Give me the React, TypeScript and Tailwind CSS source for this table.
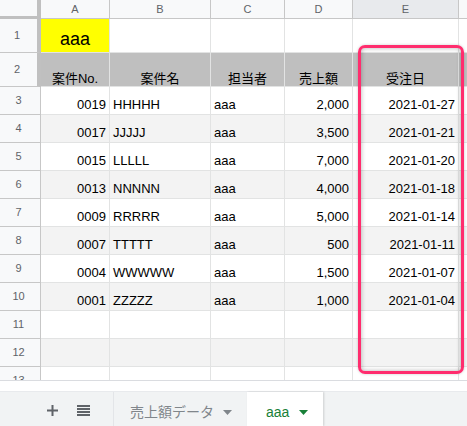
import React from "react";

type Row = {
  no: string;
  name: string;
  person: string;
  amount: string;
  date: string;
};

const data: Row[] = [
  { no: "0019", name: "HHHHH", person: "aaa", amount: "2,000", date: "2021-01-27" },
  { no: "0017", name: "JJJJJ", person: "aaa", amount: "3,500", date: "2021-01-21" },
  { no: "0015", name: "LLLLL", person: "aaa", amount: "7,000", date: "2021-01-20" },
  { no: "0013", name: "NNNNN", person: "aaa", amount: "4,000", date: "2021-01-18" },
  { no: "0009", name: "RRRRR", person: "aaa", amount: "5,000", date: "2021-01-14" },
  { no: "0007", name: "TTTTT", person: "aaa", amount: "500", date: "2021-01-11" },
  { no: "0004", name: "WWWWW", person: "aaa", amount: "1,500", date: "2021-01-07" },
  { no: "0001", name: "ZZZZZ", person: "aaa", amount: "1,000", date: "2021-01-04" },
];

const headers = ["案件No.", "案件名", "担当者", "売上額", "受注日"];

const cell = "border-r border-b border-[#e2e3e3] flex items-end pb-[2px] overflow-hidden whitespace-nowrap";
const rowHead =
  "bg-[#f8f9fa] border-r border-b border-[#c7c7c7] flex items-center justify-center text-[11px] text-[#5f6368] pr-[3px]";

const App = () => {
  // rows 3..13 : 8 data rows + empty ones
  const bodyRows: (Row | null)[] = [...data, null, null, null];

  return (
    <div className="w-[467px] h-[426px] flex flex-col bg-white overflow-hidden font-['Liberation_Sans','Noto_Sans_CJK_JP',sans-serif] text-[13px] leading-[15px] text-black">
      <div className="relative h-[380px] overflow-hidden">
        <div className="grid grid-cols-[41px_69px_101px_74px_68px_106px_8px] grid-rows-[19px_34px_34px_repeat(11,28px)]">
          {/* column header */}
          <div className="bg-[#f8f9fa] border-r-4 border-b-[3px] border-[#c0c0c0]" />
          {["A", "B", "C", "D", "E"].map((c) => (
            <div
              key={c}
              className={`${c === "E" ? "bg-[#e8eaed]" : "bg-[#f8f9fa]"} border-r border-b border-[#c7c7c7] flex items-center justify-center text-[11px] text-[#5f6368]`}
            >
              {c}
            </div>
          ))}
          <div className="bg-[#f8f9fa] border-b border-[#c7c7c7]" />

          {/* row 1 */}
          <div className={`${rowHead} border-r-4 border-r-[#c0c0c0]`}>1</div>
          <div className="bg-[#ffff00] border-r border-b border-[#e2e3e3] flex items-end justify-center pb-[4px] text-[18px] leading-none">
            aaa
          </div>
          <div className={cell} />
          <div className={cell} />
          <div className={cell} />
          <div className={cell} />
          <div className="border-b border-[#e2e3e3]" />

          {/* row 2 */}
          <div className={`${rowHead} border-r-4 border-r-[#c0c0c0]`}>2</div>
          {headers.map((h) => (
            <div key={h} className={`${cell} bg-[#bfbfbf] justify-center !pb-0`}>
              {h}
            </div>
          ))}
          <div className="bg-[#bfbfbf] border-b border-[#e2e3e3]" />

          {/* rows 3.. */}
          {bodyRows.map((r, i) => {
            const bg = i % 2 === 1 ? "bg-[#f3f3f3]" : "bg-white";
            return (
              <React.Fragment key={i}>
                <div className={rowHead}>{i + 3}</div>
                <div className={`${cell} ${bg} justify-end pr-[3px]`}>{r?.no}</div>
                <div className={`${cell} ${bg} pl-[3px]`}>{r?.name}</div>
                <div className={`${cell} ${bg} pl-[3px]`}>{r?.person}</div>
                <div className={`${cell} ${bg} justify-end pr-[3px]`}>{r?.amount}</div>
                <div className={`${cell} ${bg} justify-end pr-[3px]`}>{r?.date}</div>
                <div className={`border-b border-[#e2e3e3] ${bg}`} />
              </React.Fragment>
            );
          })}
        </div>

        {/* highlight */}
        <div className="absolute left-[358px] top-[45px] w-[106px] h-[329px] rounded-[7px] border-[3px] border-[#ff2d6e] shadow-[inset_0_0_5px_rgba(0,0,0,0.3),0_0_3px_rgba(0,0,0,0.2)]" />
      </div>

      <div className="h-[11px] bg-white border-t border-[#dadce0]" />

      {/* sheet tabs */}
      <div className="flex-1 flex bg-[#f1f3f4] border-t border-[#e8eaed]">
        <div className="w-[113px] flex items-center pt-[3px]">
          <svg width="11" height="11" viewBox="0 0 11 11" className="ml-[47px]">
            <path d="M5.5 0v11M0 5.5h11" stroke="#5f6368" strokeWidth="2" />
          </svg>
          <svg width="13" height="11" viewBox="0 0 13 11" className="ml-[19px]">
            <path d="M0 1h13M0 4h13M0 7h13M0 10h13" stroke="#5f6368" strokeWidth="1.8" />
          </svg>
        </div>
        <div className="w-[134px] flex items-center pl-[16px] pt-[7px] border-l border-[#e3e5e8] text-[14px] text-[#80868b]">
          売上額データ
          <svg width="9" height="5" viewBox="0 0 9 5" className="ml-[9px]">
            <path d="M0 0h9L4.5 5z" fill="#80868b" />
          </svg>
        </div>
        <div className="w-[76px] flex items-center pl-[19px] pt-[7px] bg-white shadow-[1px_0_2px_rgba(0,0,0,0.15)] text-[14px] text-[#188038]">
          aaa
          <svg width="9" height="5" viewBox="0 0 9 5" className="ml-[10px]">
            <path d="M0 0h9L4.5 5z" fill="#188038" />
          </svg>
        </div>
      </div>
    </div>
  );
};

export default App;
